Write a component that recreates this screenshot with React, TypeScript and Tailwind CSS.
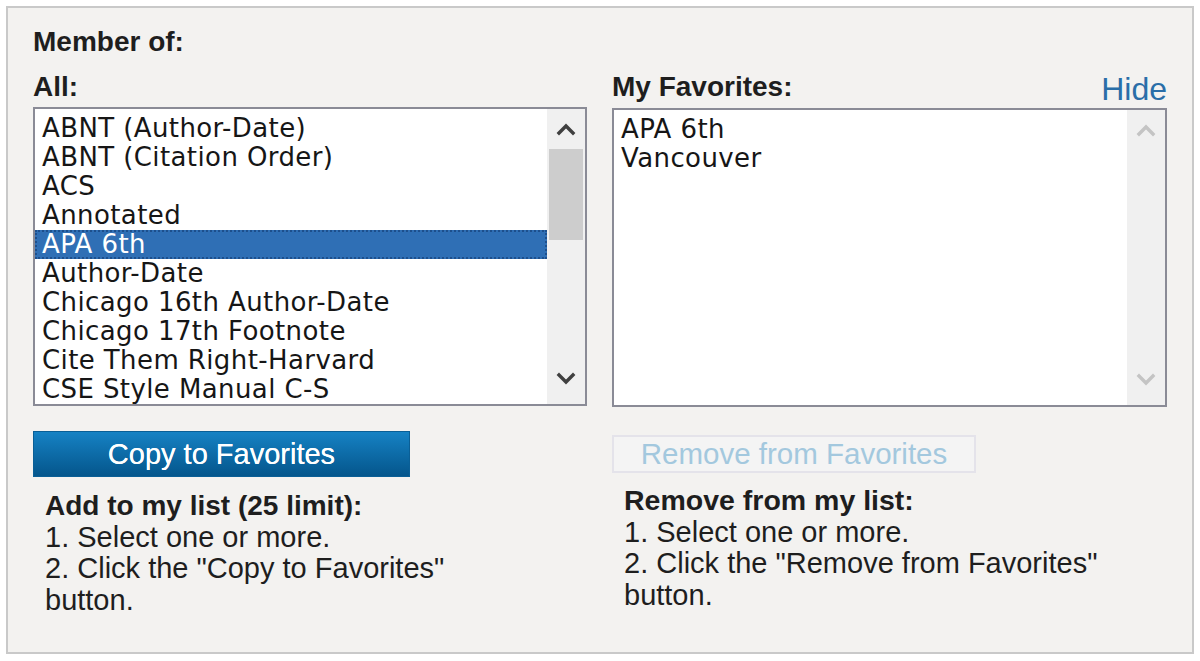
const allStyles = [
  "ABNT (Author-Date)",
  "ABNT (Citation Order)",
  "ACS",
  "Annotated",
  "APA 6th",
  "Author-Date",
  "Chicago 16th Author-Date",
  "Chicago 17th Footnote",
  "Cite Them Right-Harvard",
  "CSE Style Manual C-S",
];

const favorites = ["APA 6th", "Vancouver"];

const Chevron = ({ up, color }: { up?: boolean; color: string }) => (
  <svg width="20" height="14" viewBox="0 0 20 14" fill="none">
    <path
      d={up ? "M3 11 L10 4 L17 11" : "M3 3 L10 10 L17 3"}
      stroke={color}
      strokeWidth="3.4"
      strokeLinecap="square"
    />
  </svg>
);

const ListBox = ({
  items,
  selected,
  disabled,
}: {
  items: string[];
  selected?: string;
  disabled?: boolean;
}) => (
  <div className="flex h-[299px] border-2 border-[#8a8b96] bg-white">
    <ul className="flex-1 pt-[5px] font-['DejaVu_Sans',sans-serif] text-[26px] tracking-[0.4px] text-[#161616]">
      {items.map((item) => (
        <li
          key={item}
          className={
            item === selected
              ? "h-[29px] leading-[29px] pl-[7px] bg-[#2f6fb5] text-white outline-2 outline-dotted outline-[#1d4f8c] -outline-offset-2"
              : "h-[29px] leading-[29px] pl-[7px]"
          }
        >
          {item}
        </li>
      ))}
    </ul>
    <div className="flex w-[38px] flex-col items-center bg-[#f0f0f0]">
      <div className="flex h-[40px] items-center justify-center">
        <Chevron up color={disabled ? "#c4c4c4" : "#404040"} />
      </div>
      <div className="flex-1 w-full px-[2px] pb-[37px]">
        {!disabled && <div className="h-[91px] bg-[#cdcdcd]" />}
      </div>
      <div className="flex h-[40px] items-start justify-center pt-[8px]">
        <Chevron color={disabled ? "#c4c4c4" : "#404040"} />
      </div>
    </div>
  </div>
);

export default function App() {
  return (
    <div className="h-[661px] w-[1200px] bg-white pt-[6px] pl-[6px] font-['Liberation_Sans',Arial,sans-serif]">
      <div className="h-[648px] w-[1188px] border-2 border-[#c9c9c9] bg-[#f3f2f0] px-[25px] pt-[17px] text-[#1e1e1e]">
        <h2 className="h-[41px] text-[28px] font-bold leading-[34px]">Member of:</h2>
        <div className="flex gap-[25px]">
          <div className="w-[554px]">
            <div className="h-[41px] pt-[4px] text-[28px] font-bold leading-[34px]">All:</div>
            <ListBox items={allStyles} selected="APA 6th" />
            <button className="mt-[25px] h-[46px] w-[377px] border border-[#0a5f96] bg-gradient-to-b from-[#1682c4] to-[#05568c] text-[29px] leading-[34px] text-white [text-shadow:0_0_0.6px_#fff]">
              Copy to Favorites
            </button>
            <div className="mt-[13px] pl-[12px] text-[29px] leading-[31.5px]">
              <p className="text-[28px] font-bold">Add to my list (25 limit):</p>
              <p>1. Select one or more.</p>
              <p>2. Click the "Copy to Favorites"</p>
              <p>button.</p>
            </div>
          </div>
          <div className="w-[555px]">
            <div className="flex h-[42px] items-start justify-between pt-[4px]">
              <span className="text-[28px] font-bold leading-[34px]">My Favorites:</span>
              <a className="pt-[2px] text-[32px] leading-[34px] text-[#2a6ea8]">Hide</a>
            </div>
            <ListBox items={favorites} disabled />
            <button className="mt-[28px] h-[38px] w-[364px] border-2 border-[#e4e3ea] bg-[#f4f4f4] text-[29.5px] leading-[32px] text-[#a3c8de]">
              Remove from Favorites
            </button>
            <div className="mt-[12px] pl-[12px] text-[29px] leading-[31.5px]">
              <p className="text-[28.5px] font-bold">Remove from my list:</p>
              <p>1. Select one or more.</p>
              <p>2. Click the "Remove from Favorites"</p>
              <p>button.</p>
            </div>
          </div>
        </div>
      </div>
    </div>
  );
}
